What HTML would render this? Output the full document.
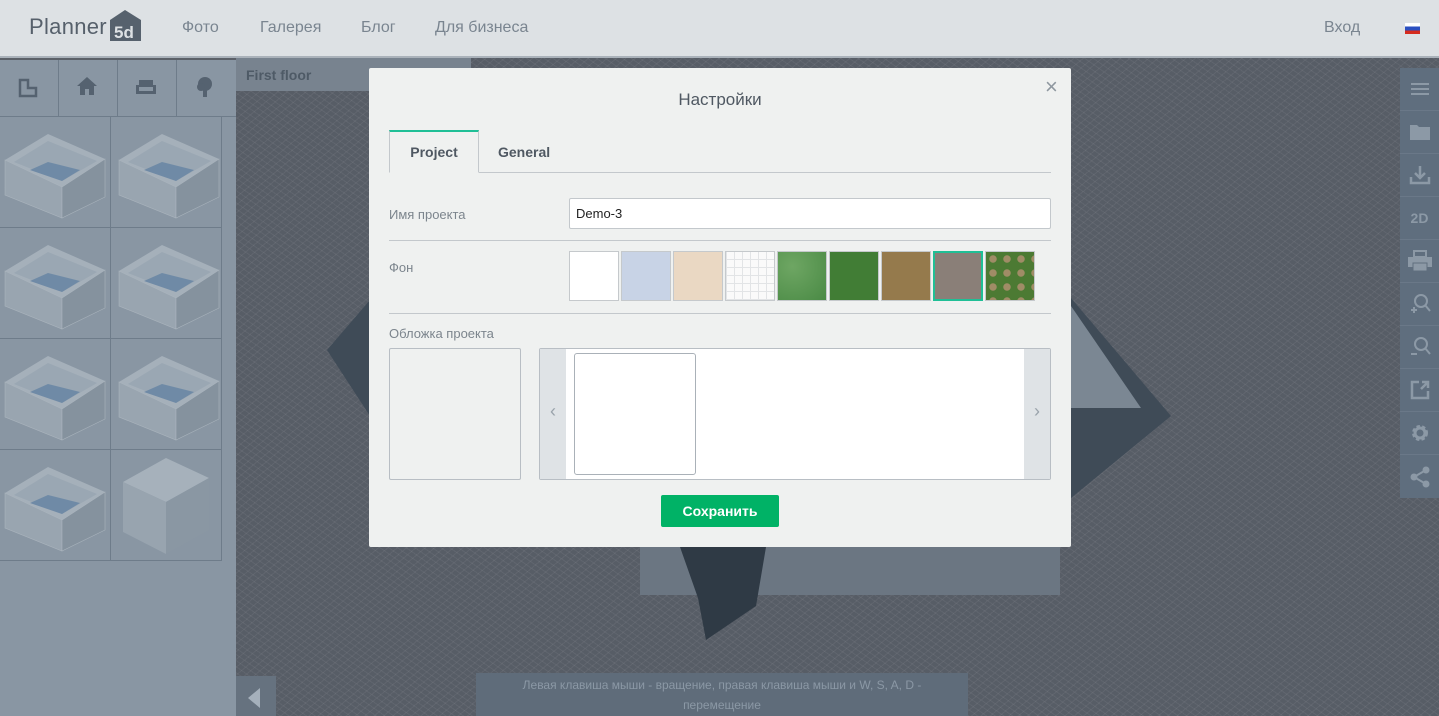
<!DOCTYPE html>
<html><head><meta charset="utf-8"><style>
*{box-sizing:border-box;margin:0;padding:0}
body{width:1439px;height:716px;overflow:hidden;font-family:"Liberation Sans",sans-serif;background:#5b6068;position:relative}
.hdr{position:absolute;left:0;top:0;width:1439px;height:58px;background:#dde1e4;border-bottom:2px solid #aab2ba}
.hdr a{position:absolute;top:19px;font-size:16px;color:#7a8590;text-decoration:none}
.bg{position:absolute;left:236px;top:58px;width:1203px;height:658px;background:
repeating-linear-gradient(35deg,rgba(255,255,255,.05) 0 1px,transparent 1px 5px),
repeating-linear-gradient(-40deg,rgba(255,255,255,.05) 0 1px,transparent 1px 6px),#575d66}
.left{position:absolute;left:0;top:60px;width:236px;height:656px;background:#8996a3}
.tabs{position:absolute;left:0;top:0;width:236px;height:57px;border-bottom:1px solid #6e7c8a}
.tabs div{position:absolute;top:0;width:59px;height:57px;border-right:1px solid #6e7c8a}
.cell{position:absolute;width:111px;height:111px;border-right:1px solid #6e7c8a;border-bottom:1px solid #6e7c8a}
.rt{position:absolute;left:1400px;top:68px;width:39px;height:430px;background:#5f6e7e}
.rt div{height:43px;display:flex;align-items:center;justify-content:center;border-bottom:1px solid #6a7888;color:#8c99a6;font-weight:bold;font-size:14px}
.modal{position:absolute;left:369px;top:68px;width:702px;height:479px;background:#eff1f0;border-radius:2px}
.lbl{position:absolute;font-size:13px;color:#7c858d}
.sw{position:absolute;top:251px;width:50px;height:50px;border:1px solid #c5c9cc}
</style></head><body>
<div class="hdr">
 <div style="position:absolute;left:29px;top:14px;font-size:22px;color:#56606b;letter-spacing:.3px">Planner</div>
 <svg style="position:absolute;left:108px;top:8px" width="35" height="35" viewBox="0 0 35 35"><path d="M2 12 L17 2 L33 12 V33 H2Z" fill="#56616d"/><text x="6" y="30" font-family="Liberation Sans" font-weight="bold" font-size="17" fill="#dde1e4">5d</text></svg>
 <a style="left:182px">Фото</a><a style="left:260px">Галерея</a><a style="left:361px">Блог</a><a style="left:435px">Для бизнеса</a>
 <a style="left:1324px">Вход</a>
 <div style="position:absolute;left:1405px;top:23px;width:15px;height:11px;background:linear-gradient(#fff 0 33%,#2a4fc0 33% 66%,#d52b1e 66%)"></div>
</div>
<div class="bg">
 <div style="position:absolute;left:0;top:0;width:235px;height:33px;background:#78838f;color:#4e5a66;font-weight:bold;font-size:14px;padding:9px 10px">First floor</div>
 <svg style="position:absolute;left:0;top:0" width="1203" height="658">
  <polygon points="91,292 134,242 134,358 91,292" fill="#3f4b57"/>
  <polygon points="835,240 935,358 835,440" fill="#3f4b57"/>
  <polygon points="835,248 905,350 835,350" fill="#7b8793"/>
  <rect x="404" y="489" width="420" height="48" fill="#6b7682"/>
  <polygon points="444,489 530,489 520,548 470,582 462,540" fill="#2f3a45"/>
 </svg>
 <div style="position:absolute;left:0;top:618px;width:40px;height:40px;background:#66727f"><div style="margin:12px 0 0 12px;width:0;height:0;border-top:10px solid transparent;border-bottom:10px solid transparent;border-right:12px solid #a5b0bb"></div></div>
 <div style="position:absolute;left:240px;top:615px;width:492px;height:43px;background:#5f6c7a;color:#8b98a5;font-size:12px;text-align:center;line-height:20px;padding-top:2px">Левая клавиша мыши - вращение, правая клавиша мыши и W, S, A, D -<br>перемещение</div>
</div>
<div class="left">
 <div class="tabs"><div style="left:0"></div><div style="left:59px"></div><div style="left:118px"></div><div style="left:177px;border:none"></div>
  <svg style="position:absolute;left:18px;top:18px" width="20" height="20"><path d="M2 2V18H18V10H10V2Z" fill="none" stroke="#556270" stroke-width="2.5"/></svg>
  <svg style="position:absolute;left:76px;top:16px" width="22" height="20"><path d="M11 1L1 10H4V19H9V13H13V19H18V10H21Z" fill="#556270"/></svg>
  <svg style="position:absolute;left:135px;top:19px" width="22" height="16"><path d="M4 1H18V8H4Z M1 6H4V12H18V6H21V15H1Z" fill="#556270"/></svg>
  <svg style="position:absolute;left:196px;top:16px" width="18" height="22"><circle cx="9" cy="8" r="7" fill="#556270"/><circle cx="5" cy="11" r="4" fill="#556270"/><rect x="7" y="12" width="4" height="9" fill="#556270"/></svg>
 </div>
 <div class="cell" style="left:0;top:57px"></div><div class="cell" style="left:111px;top:57px"></div>
 <div class="cell" style="left:0;top:168px"></div><div class="cell" style="left:111px;top:168px"></div>
 <div class="cell" style="left:0;top:279px"></div><div class="cell" style="left:111px;top:279px"></div>
 <div class="cell" style="left:0;top:390px"></div><div class="cell" style="left:111px;top:390px"></div>
 <svg style="position:absolute;left:0;top:57px" width="222" height="444">
  <defs>
   <g id="box">
    <polygon points="5,43 48,17 105,42 62,70" fill="#a5b0ba"/>
    <polygon points="14,45 48,24 97,44 62,64" fill="#9aa7b3"/>
    <polygon points="30,53 48,45 80,53 62,64" fill="#6f8aa6"/>
    <polygon points="5,43 62,70 62,101 5,78" fill="#99a5b0" stroke="#aab4bd" stroke-width=".6"/>
    <polygon points="62,70 105,42 105,80 62,101" fill="#85929e" stroke="#aab4bd" stroke-width=".6"/>
   </g>
  </defs>
  <use href="#box" x="0" y="0"/>
  <use href="#box" x="114" y="0"/>
  <use href="#box" x="0" y="111"/>
  <use href="#box" x="114" y="111"/>
  <use href="#box" x="0" y="222"/>
  <use href="#box" x="114" y="222"/>
  <use href="#box" x="0" y="333"/>
  <g transform="translate(111,333)">
   <polygon points="12,32 55,8 98,28 55,52" fill="#a6b1bb"/>
   <polygon points="12,32 55,52 55,104 12,82" fill="#98a4af"/>
   <polygon points="55,52 98,28 98,80 55,104" fill="#8a97a3"/>
  </g>
 </svg>
</div>
<div class="rt">
 <div><svg width="18" height="12"><path d="M0 1H18M0 6H18M0 11H18" stroke="#8c99a6" stroke-width="2"/></svg></div>
 <div><svg width="22" height="18"><path d="M1 2H8L10 4H21V17H1Z" fill="#8c99a6"/></svg></div>
 <div><svg width="22" height="20"><path d="M11 1V12M6 8L11 13L16 8M2 12V18H20V12" fill="none" stroke="#8c99a6" stroke-width="2.5"/></svg></div>
 <div>2D</div>
 <div><svg width="26" height="22"><rect x="7" y="1" width="12" height="6" fill="none" stroke="#8c99a6" stroke-width="2"/><rect x="1" y="7" width="24" height="10" fill="#8c99a6"/><rect x="6" y="13" width="14" height="8" fill="#8c99a6" stroke="#5f6e7e"/></svg></div>
 <div><svg width="22" height="22"><circle cx="12" cy="8" r="6" fill="none" stroke="#8c99a6" stroke-width="2"/><path d="M16 12L21 18M2 17H8M5 14V20" stroke="#8c99a6" stroke-width="2"/></svg></div>
 <div><svg width="22" height="22"><circle cx="12" cy="8" r="6" fill="none" stroke="#8c99a6" stroke-width="2"/><path d="M16 12L21 18M2 18H8" stroke="#8c99a6" stroke-width="2"/></svg></div>
 <div><svg width="20" height="20"><path d="M9 2H2V18H18V11M11 9L18 2M12 2H18V8" fill="none" stroke="#8c99a6" stroke-width="2.5"/></svg></div>
 <div><svg width="20" height="20"><circle cx="10" cy="10" r="6" fill="none" stroke="#8c99a6" stroke-width="4" stroke-dasharray="3 2"/><circle cx="10" cy="10" r="5" fill="none" stroke="#8c99a6" stroke-width="3"/></svg></div>
 <div style="border:none"><svg width="22" height="22"><path d="M17 4L5 11L17 18" fill="none" stroke="#8c99a6" stroke-width="2"/><circle cx="17" cy="4" r="3.5" fill="#8c99a6"/><circle cx="5" cy="11" r="3.5" fill="#8c99a6"/><circle cx="17" cy="18" r="3.5" fill="#8c99a6"/></svg></div>
</div>
<div class="modal">
 <div style="position:absolute;left:0;top:22px;width:702px;text-align:center;font-size:17px;color:#4f5862">Настройки</div>
 <div style="position:absolute;left:676px;top:6px;font-size:22px;color:#8e979f">×</div>
 <div style="position:absolute;left:20px;top:104px;width:662px;height:1px;background:#c3c8cc"></div>
 <div style="position:absolute;left:20px;top:62px;width:90px;height:43px;border:1px solid #c3c8cc;border-top:2px solid #1fbf96;border-bottom:1px solid #eff1f0;background:#eff1f0;font-weight:bold;font-size:14px;color:#4f5862;text-align:center;padding-top:12px">Project</div>
 <div style="position:absolute;left:129px;top:76px;font-weight:bold;font-size:14px;color:#4f5862">General</div>
 <div class="lbl" style="left:20px;top:139px">Имя проекта</div>
 <div style="position:absolute;left:200px;top:130px;width:482px;height:31px;background:#fff;border:1px solid #c3c8cc;border-radius:2px;font-size:13px;padding:7px 6px;color:#222">Demo-3</div>
 <div style="position:absolute;left:20px;top:172px;width:662px;height:1px;background:#c3c8cc"></div>
 <div class="lbl" style="left:20px;top:192px">Фон</div>
 <div class="sw" style="left:200px;top:183px;background:#fff"></div>
 <div class="sw" style="left:252px;top:183px;background:#c8d3e6"></div>
 <div class="sw" style="left:304px;top:183px;background:#ead8c3"></div>
 <div class="sw" style="left:356px;top:183px;background:repeating-linear-gradient(90deg,#e2e4e6 0 1px,transparent 1px 8px),repeating-linear-gradient(0deg,#e2e4e6 0 1px,#fafafa 1px 8px)"></div>
 <div class="sw" style="left:408px;top:183px;background:radial-gradient(circle at 30% 30%,#6ea663,#4a8a45)"></div>
 <div class="sw" style="left:460px;top:183px;background:#417d35"></div>
 <div class="sw" style="left:512px;top:183px;background:#957a4c"></div>
 <div class="sw" style="left:564px;top:183px;background:#8a7f78;border:2px solid #1fbf96"></div>
 <div class="sw" style="left:616px;top:183px;background:radial-gradient(circle,#a08c66 35%,transparent 40%) 0 0/14px 14px,#4c7a33"></div>
 <div style="position:absolute;left:20px;top:245px;width:662px;height:1px;background:#c3c8cc"></div>
 <div class="lbl" style="left:20px;top:258px">Обложка проекта</div>
 <div style="position:absolute;left:20px;top:280px;width:132px;height:132px;border:1px solid #b8bec4;border-radius:2px"></div>
 <div style="position:absolute;left:170px;top:280px;width:512px;height:132px;border:1px solid #b8bec4;border-radius:2px;background:#fff">
  <div style="position:absolute;left:0;top:0;width:26px;height:130px;background:#dfe3e6;color:#9aa3ab;font-size:18px;text-align:center;padding-top:52px">‹</div>
  <div style="position:absolute;right:0;top:0;width:26px;height:130px;background:#dfe3e6;color:#9aa3ab;font-size:18px;text-align:center;padding-top:52px">›</div>
  <div style="position:absolute;left:34px;top:4px;width:122px;height:122px;border:1px solid #aab1b8;border-radius:3px"></div>
 </div>
 <div style="position:absolute;left:292px;top:427px;width:118px;height:32px;background:#00b266;border-radius:2px;color:#fff;font-weight:bold;font-size:14px;text-align:center;line-height:32px">Сохранить</div>
</div>
</body></html>
